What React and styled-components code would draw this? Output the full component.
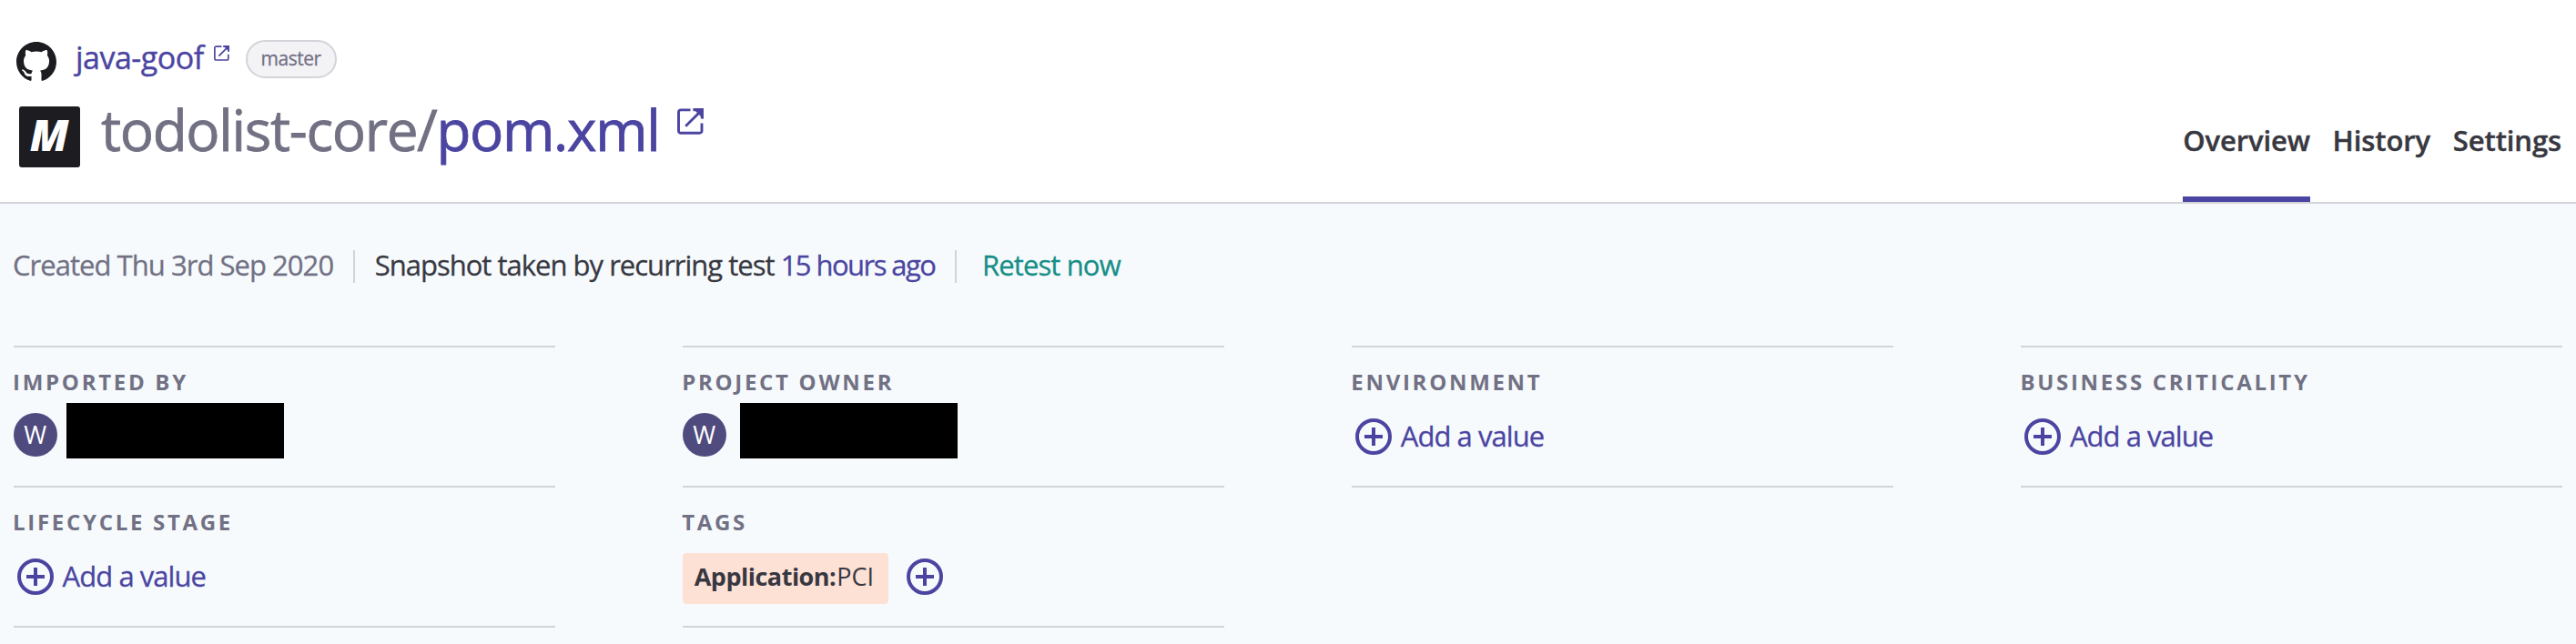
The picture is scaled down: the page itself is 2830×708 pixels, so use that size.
import React from "react";
import styled, { createGlobalStyle } from "styled-components";

const color = {
  purple: "#4b45a1",
  gray: "#727184",
  dark: "#383841",
  black: "#1c1c21",
  line: "#d3d3d9",
  page: "#f6fafd",
};

const GlobalStyle = createGlobalStyle`
  * { box-sizing: border-box; }
  body {
    margin: 0;
    background: ${color.page};
    color: ${color.dark};
    font-family: "Open Sans", "Noto Sans", sans-serif;
    font-size: 31px;
  }
  a { color: inherit; text-decoration: none; }
`;

const Page = styled.div`
  height: 708px;
  overflow: hidden;
  white-space: nowrap;
`;

const Header = styled.header`
  display: flex;
  justify-content: space-between;
  height: 224px;
  padding: 40px 16px 0 14px;
  background: #fff;
  border-bottom: 2px solid ${color.line};
`;

const RepoRow = styled.div`
  display: flex;
  align-items: flex-start;
  height: 44px;
  padding-left: 4px;
`;

const RepoLink = styled.a`
  margin: 1px 0 0 21px;
  color: ${color.purple};
  font-size: 34px;
  line-height: 44px;
  letter-spacing: -0.5px;
  -webkit-text-stroke: 0.4px;
`;

const GithubIcon = styled.svg`
  width: 44px;
  height: 44px;
  margin-top: 6px;
  fill: ${color.black};
`;

const ExternalIcon = styled.svg`
  flex: none;
  width: ${(p) => p.$size}px;
  height: ${(p) => p.$size}px;
  margin: ${(p) => (p.$size > 20 ? "13px 0 0 20px" : "10px 0 0 11px")};
  fill: none;
  stroke: ${color.purple};
  stroke-width: 2.9;
`;

const Branch = styled.span`
  width: 100px;
  height: 42px;
  margin: 4px 0 0 18px;
  border: 2px solid ${color.line};
  border-radius: 21px;
  background: #f3f3f6;
  color: ${color.gray};
  font-size: 21px;
  line-height: 37px;
  text-align: center;
  letter-spacing: -0.5px;
  -webkit-text-stroke: 0.3px;
`;

const TitleRow = styled.h1`
  display: flex;
  align-items: flex-start;
  margin: 22px 0 0;
  padding-left: 6.5px;
  font-size: 62px;
  font-weight: 400;
  line-height: 73px;
  letter-spacing: -1.35px;
  -webkit-text-stroke: 0.8px;
`;

const MavenLogo = styled.span`
  width: 67px;
  height: 67px;
  margin: 11px 23.5px 0 0;
  border-radius: 3px;
  background: ${color.black};
  color: #fff;
  font-size: 47px;
  font-style: italic;
  font-weight: 800;
  line-height: 63px;
  text-align: center;
  letter-spacing: 0;
  -webkit-text-stroke: 0;
`;

const Folder = styled.span`
  color: ${color.gray};
`;

const FileName = styled.a`
  color: ${color.purple};
`;

const Tabs = styled.nav`
  display: flex;
  gap: 24.7px;
`;

const Tab = styled.a`
  height: 182px;
  padding-top: 92px;
  border-bottom: 6px solid ${(p) => (p.$active ? color.purple : "transparent")};
  font-weight: 600;
  line-height: 44px;
  letter-spacing: -0.1px;
  -webkit-text-stroke: 0.4px;
`;

const Summary = styled.div`
  display: flex;
  align-items: flex-start;
  height: 156px;
  padding: 51px 14px 0;
  line-height: 36px;
  -webkit-text-stroke: 0.3px;
`;

const SummaryItem = styled.span`
  margin-top: -2px;
  color: ${(p) => p.$tone};
  letter-spacing: ${(p) => p.$track || -1}px;
`;

const Divider = styled.span`
  width: 2px;
  height: 36px;
  margin: 0 ${(p) => p.$after}px 0 22px;
  background: ${color.line};
`;

const Grid = styled.div`
  display: grid;
  grid-template-columns: repeat(4, 1fr);
  grid-auto-rows: 154px;
  column-gap: 140px;
  padding: 0 15px 0 14.6px;
`;

const Cell = styled.section`
  border-top: 2px solid ${color.line};
`;

const Label = styled.h2`
  margin: 20px 0 0 -0.5px;
  color: ${color.gray};
  font-size: 24px;
  font-weight: 700;
  line-height: 35px;
  letter-spacing: 2.7px;
  text-transform: uppercase;
`;

const Value = styled.div`
  display: flex;
  align-items: center;
  height: 56px;
  margin-top: 15px;
`;

const AddButton = styled.a`
  display: flex;
  align-items: center;
  margin-left: ${(p) => p.$indent}px;
  color: ${color.purple};
`;

const AddText = styled.span`
  margin: -3px 0 0 10px;
  letter-spacing: -0.95px;
  -webkit-text-stroke: 0.3px;
`;

const PlusIcon = styled.svg`
  width: 40px;
  height: 40px;
  fill: none;
  stroke: currentColor;
  stroke-width: 4;
`;

const Person = styled.div`
  display: flex;
  align-items: flex-start;
  padding-top: 6px;
`;

const Avatar = styled.span`
  width: 48px;
  height: 48px;
  margin-top: 11px;
  border-radius: 50%;
  background: #4f4b7e;
  color: #fff;
  font-size: 27px;
  line-height: 48px;
  text-align: center;
`;

const Redacted = styled.span`
  width: 239px;
  height: 61px;
  margin-left: ${(p) => p.$gap}px;
  background: #000;
`;

const Tag = styled.span`
  width: 226px;
  height: 56px;
  margin-top: 4px;
  padding-left: 13px;
  border-radius: 4px;
  background: #fde1d5;
  font-size: 27px;
  line-height: 51px;
`;

const TagKey = styled.b`
  margin-right: 1px;
  font-weight: 700;
  letter-spacing: -0.5px;
`;

function Github() {
  return (
    <GithubIcon viewBox="0 0 16 16" aria-hidden="true">
      <path d="M8 0C3.58 0 0 3.58 0 8c0 3.54 2.29 6.53 5.47 7.59.4.07.55-.17.55-.38 0-.19-.01-.82-.01-1.49-2.01.37-2.53-.49-2.69-.94-.09-.23-.48-.94-.82-1.13-.28-.15-.68-.52-.01-.53.63-.01 1.08.58 1.23.82.72 1.21 1.87.87 2.33.66.07-.52.28-.87.51-1.07-1.78-.2-3.64-.89-3.64-3.95 0-.87.31-1.59.82-2.15-.08-.2-.36-1.02.08-2.12 0 0 .67-.21 2.2.82.64-.18 1.32-.27 2-.27s1.36.09 2 .27c1.53-1.04 2.2-.82 2.2-.82.44 1.1.16 1.92.08 2.12.51.56.82 1.27.82 2.15 0 3.07-1.87 3.75-3.65 3.95.29.25.54.73.54 1.48 0 1.07-.01 1.93-.01 2.2 0 .21.15.46.55.38A8.01 8.01 0 0 0 16 8c0-4.42-3.58-8-8-8z" />
    </GithubIcon>
  );
}

function External({ size }) {
  return (
    <ExternalIcon $size={size} viewBox="0 0 29 29" aria-hidden="true">
      <path d="M14.5 1.9H4A2.4 2.4 0 0 0 1.5 4.3v20.6A2.4 2.4 0 0 0 4 27.3h20.6a2.4 2.4 0 0 0 2.4-2.4V16.5M17.5 1.9h9.7v9.6M26.6 2.4 9.2 19.8" />
      <path d="M20.5 1.5h7v7z" />
    </ExternalIcon>
  );
}

function Plus() {
  return (
    <PlusIcon viewBox="0 0 40 40" aria-hidden="true">
      <circle cx="20" cy="20" r="18" />
      <path d="M20 10v20M10 20h20" />
    </PlusIcon>
  );
}

function Field({ label, children }) {
  return (
    <Cell>
      <Label>{label}</Label>
      {children}
    </Cell>
  );
}

function AddValue() {
  return (
    <Value>
      <AddButton $indent={4}>
        <Plus />
        <AddText>Add a value</AddText>
      </AddButton>
    </Value>
  );
}

export default function App() {
  return (
    <Page>
      <GlobalStyle />
      <Header>
        <div>
          <RepoRow>
            <Github />
            <RepoLink>java-goof</RepoLink>
            <External size={17} />
            <Branch>master</Branch>
          </RepoRow>
          <TitleRow>
            <MavenLogo>M</MavenLogo>
            <Folder>todolist-core/</Folder>
            <FileName>pom.xml</FileName>
            <External size={29} />
          </TitleRow>
        </div>
        <Tabs>
          <Tab $active>Overview</Tab>
          <Tab>History</Tab>
          <Tab>Settings</Tab>
        </Tabs>
      </Header>
      <Summary>
        <SummaryItem $tone={color.gray} $track={-0.96}>Created Thu 3rd Sep 2020</SummaryItem>
        <Divider $after={21.5} />
        <SummaryItem $tone={color.dark} $track={-0.99}>Snapshot taken by recurring test&nbsp;</SummaryItem>
        <SummaryItem $tone={color.purple} $track={-1.55}>15 hours ago</SummaryItem>
        <Divider $after={27.5} />
        <SummaryItem $tone="#168e87" $track={-0.87}>Retest now</SummaryItem>
      </Summary>
      <Grid>
        <Field label="Imported by">
          <Person>
            <Avatar>W</Avatar>
            <Redacted $gap={10} />
          </Person>
        </Field>
        <Field label="Project owner">
          <Person>
            <Avatar>W</Avatar>
            <Redacted $gap={15} />
          </Person>
        </Field>
        <Field label="Environment"><AddValue /></Field>
        <Field label="Business criticality"><AddValue /></Field>
        <Field label="Lifecycle stage"><AddValue /></Field>
        <Field label="Tags">
          <Value>
            <Tag><TagKey>Application:</TagKey>PCI</Tag>
            <AddButton $indent={20}><Plus /></AddButton>
          </Value>
        </Field>
        <Cell />
        <Cell />
        <Cell />
        <Cell />
      </Grid>
    </Page>
  );
}
